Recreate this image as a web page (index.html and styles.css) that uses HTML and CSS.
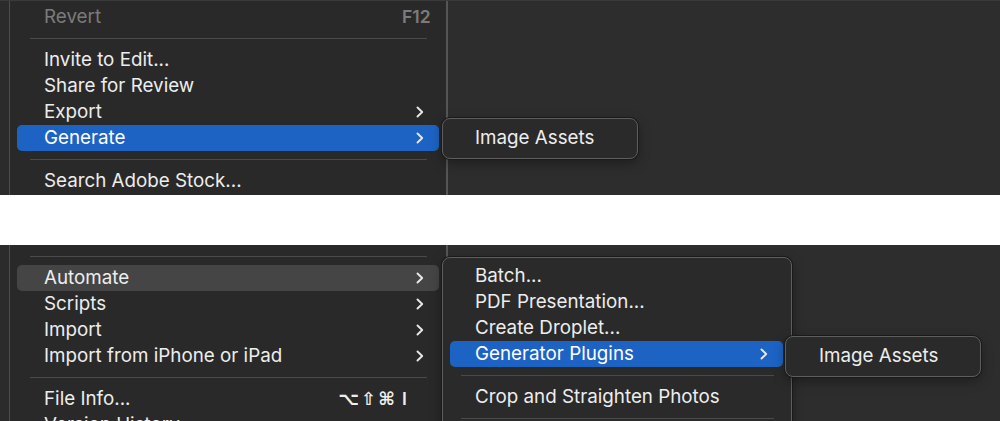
FILE: index.html
```html
<!DOCTYPE html>
<html>
<head>
<meta charset="utf-8">
<link rel="stylesheet" href="styles.css">
</head>
<body>
<div class="panel panel-top">
  <div class="strip"></div>
  <div class="menu">
    <div class="row disabled"><span class="label">Revert</span><span class="keys"><span class="mods"></span><span class="key">F12</span></span></div>
    <div class="sep"></div>
    <div class="row"><span class="label">Invite to Edit...</span></div>
    <div class="row"><span class="label">Share for Review</span></div>
    <div class="row"><span class="label">Export</span><svg class="chev" viewBox="0 0 8 12" width="8" height="12"><path d="M1.5 1.5 L6.2 6 L1.5 10.5"/></svg></div>
    <div class="row active"><span class="label">Generate</span><svg class="chev" viewBox="0 0 8 12" width="8" height="12"><path d="M1.5 1.5 L6.2 6 L1.5 10.5"/></svg></div>
    <div class="sep"></div>
    <div class="row"><span class="label">Search Adobe Stock...</span></div>
  </div>
  <div class="rest"></div>
  <div class="submenu sub-a">
    <div class="row sub-row"><span class="label">Image Assets</span></div>
  </div>
</div>
<div class="gap"></div>
<div class="panel panel-bottom">
  <div class="strip"></div>
  <div class="menu">
    <div class="sep"></div>
    <div class="row hover"><span class="label">Automate</span><svg class="chev" viewBox="0 0 8 12" width="8" height="12"><path d="M1.5 1.5 L6.2 6 L1.5 10.5"/></svg></div>
    <div class="row"><span class="label">Scripts</span><svg class="chev" viewBox="0 0 8 12" width="8" height="12"><path d="M1.5 1.5 L6.2 6 L1.5 10.5"/></svg></div>
    <div class="row"><span class="label">Import</span><svg class="chev" viewBox="0 0 8 12" width="8" height="12"><path d="M1.5 1.5 L6.2 6 L1.5 10.5"/></svg></div>
    <div class="row"><span class="label">Import from iPhone or iPad</span><svg class="chev" viewBox="0 0 8 12" width="8" height="12"><path d="M1.5 1.5 L6.2 6 L1.5 10.5"/></svg></div>
    <div class="sep"></div>
    <div class="row"><span class="label">File Info...</span><span class="keys"><span class="mods">⌥⇧⌘</span><span class="key">I</span></span></div>
    <div class="row"><span class="label">Version History</span></div>
  </div>
  <div class="rest"></div>
  <div class="submenu sub-b">
    <div class="row"><span class="label">Batch...</span></div>
    <div class="row"><span class="label">PDF Presentation...</span></div>
    <div class="row"><span class="label">Create Droplet...</span></div>
    <div class="row active"><span class="label">Generator Plugins</span><svg class="chev" viewBox="0 0 8 12" width="8" height="12"><path d="M1.5 1.5 L6.2 6 L1.5 10.5"/></svg></div>
    <div class="sep"></div>
    <div class="row"><span class="label">Crop and Straighten Photos</span></div>
    <div class="sep"></div>
  </div>
  <div class="submenu sub-c">
    <div class="row sub-row"><span class="label">Image Assets</span></div>
  </div>
</div>
</body>
</html>
```
FILE: styles.css
```css
* { box-sizing: border-box; }
html, body { margin: 0; padding: 0; background: #ffffff; }
body {
  width: 1000px;
  height: 421px;
  overflow: hidden;
  font-family: "Inter", "Liberation Sans", sans-serif;
  font-size: 18.8px;
  color: #ededed;
}
.panel {
  position: relative;
  display: flex;
  overflow: hidden;
  background: #2c2c2c;
}
.panel-top { height: 195px; border-top: 1px solid #3a3a3a; }
.panel-bottom { height: 176px; }
.gap { height: 50px; background: #ffffff; }
.strip {
  width: 10px;
  flex: none;
  background: #2b2b2b;
  border-right: 1px solid #4d4d4d;
}
.menu {
  width: 438px;
  flex: none;
  background: #292929;
  border-right: 2px solid #555555;
  padding-top: 3px;
}
.panel-bottom .menu { padding-top: 3px; }
.rest { flex: 1; background: #2d2d2d; }
.row {
  height: 26px;
  margin: 0 7px;
  padding: 0 15px 0 27px;
  display: flex;
  align-items: center;
  justify-content: space-between;
  border-radius: 5px;
  white-space: nowrap;
  line-height: 26px;
}
.row.active { background: #1d63c3; color: #ffffff; }
.row.hover { background: #454545; }
.row.disabled { color: #7b7b7b; }
.chev { flex: none; }
.chev path {
  fill: none;
  stroke: #e8e8e8;
  stroke-width: 1.9;
  stroke-linecap: round;
  stroke-linejoin: round;
}
.keys { display: flex; align-items: center; }
.mods {
  font-family: "DejaVu Sans", sans-serif;
  font-size: 18px;
  letter-spacing: 2px;
  font-weight: bold;
}
.key { width: 22px; margin-left: 5px; text-align: left; font-size: 17.5px; font-weight: 600; }
.sep {
  height: 17px;
  padding: 8px 19px 8px 20px;
}
.sep::before {
  content: "";
  display: block;
  height: 1px;
  background: #4a4a4a;
}
.submenu {
  position: absolute;
  background: #2a2a2a;
  border: 1px solid #5e5e5e;
  border-radius: 8px;
  box-shadow: 0 0 0 1px #1a1a1a, 0 4px 12px rgba(0,0,0,0.35);
  padding: 6px 0;
}
.sub-a { left: 442px; top: 117px; width: 196px; height: 41px; }
.sub-row { padding-left: 25px; }
.sub-b { left: 442px; top: 12px; width: 350px; padding: 5px 0 20px; }
.sub-b .row { margin: 0 8px 0 7px; padding-left: 25px; }
.sub-b .sep { padding: 8px 17px 8px 18px; }
.sub-c { left: 785px; top: 91px; width: 196px; height: 41px; }
.sub-c .sub-row { padding-left: 26px; }
```
